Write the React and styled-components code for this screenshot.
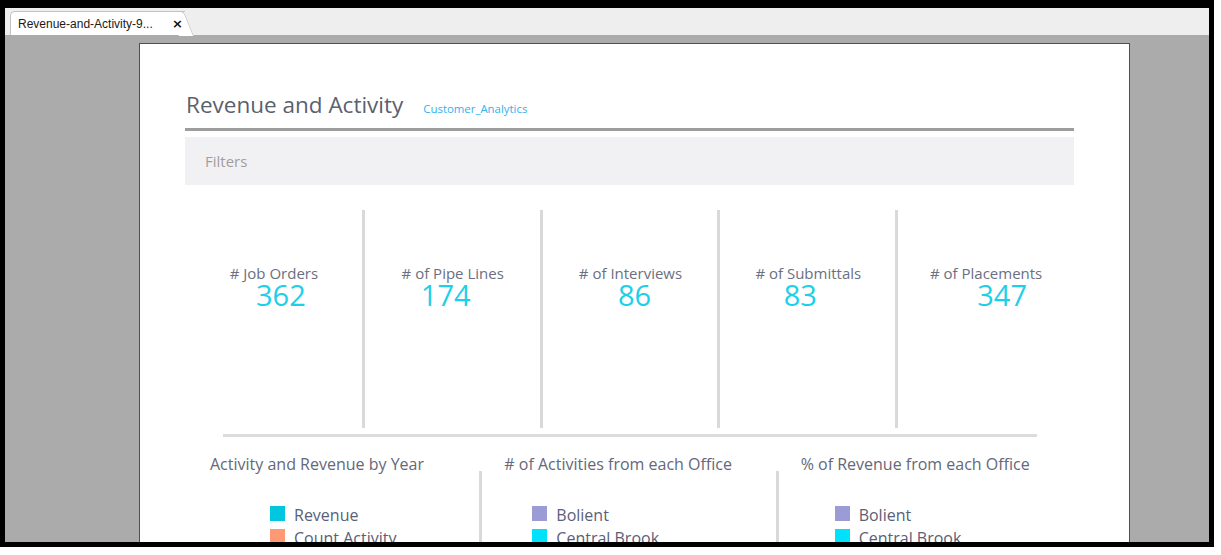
import React from 'react';
import styled, { createGlobalStyle } from 'styled-components';

const Global = createGlobalStyle`
  html, body { margin: 0; padding: 0; background: #ffffff; }
  body { font-family: "Open Sans", "Noto Sans", sans-serif; }
  * { box-sizing: border-box; }
`;

const Window = styled.div`
  width: 1214px;
  height: 547px;
  border: 5px solid #000;
  border-top-width: 8px;
  display: flex;
  flex-direction: column;
  overflow: hidden;
`;

const TabBar = styled.div`
  flex: none;
  height: 27px;
  background: #eeeeee;
  display: flex;
  align-items: flex-end;
  padding-left: 5px;
`;

const Tab = styled.div`
  position: relative;
  height: 24px;
  width: 175px;
  background: #ffffff;
  border: 1px solid #c2c2c2;
  border-right: none;
  border-bottom: none;
  border-top-left-radius: 5px;
  display: flex;
  align-items: center;
  justify-content: space-between;
  padding: 0 0 0 7px;
  font: 12px "Liberation Sans", Arial, sans-serif;
  color: #1a1a1a;
  &::after {
    content: '';
    position: absolute;
    top: -1px;
    right: -9px;
    width: 14px;
    height: 24px;
    background: #ffffff;
    border-top: 1px solid #c2c2c2;
    border-right: 1px solid #c2c2c2;
    border-top-right-radius: 4px;
    transform: skewX(22deg);
    transform-origin: bottom left;
  }
`;

const TabLabel = styled.span`
  white-space: nowrap;
`;

const TabClose = styled.span`
  position: relative;
  z-index: 1;
  font: bold 13px "DejaVu Sans", sans-serif;
  line-height: 1;
  margin-right: 2px;
  color: #111;
`;

const Stage = styled.div`
  flex: 1;
  background: #ababab;
  padding: 8px 0 0 134px;
  overflow: hidden;
`;

const Page = styled.div`
  width: 991px;
  min-height: 620px;
  background: #ffffff;
  border: 1px solid #505050;
  border-bottom: none;
  padding: 0 55px 0 45px;
`;

const Header = styled.div`
  display: flex;
  align-items: baseline;
  gap: 20px;
  padding: 46px 0 8px 1px;
  border-bottom: 3px solid #9d9d9d;
`;

const Title = styled.h1`
  margin: 0;
  font-size: 22.5px;
  font-weight: 400;
  line-height: 30px;
  color: #5b5f6e;
`;

const Tag = styled.span`
  font-size: 11.4px;
  color: #2fb2ee;
`;

const Filters = styled.div`
  margin-top: 6px;
  height: 48px;
  background: #f1f1f3;
  display: flex;
  align-items: center;
  padding-left: 20px;
  font-size: 15px;
  color: #a29d9d;
`;

const KpiRow = styled.div`
  margin-top: 25px;
  display: grid;
  grid-template-columns: repeat(5, 1fr);
  height: 218px;
`;

const Kpi = styled.div`
  display: flex;
  flex-direction: column;
  align-items: center;
  padding-top: 54px;
  border-left: ${p => (p.$first ? 'none' : '3px solid #d9d9d9')};
  margin-left: ${p => (p.$first ? '0' : '-1px')};
`;

const KpiLabel = styled.div`
  font-size: 15px;
  line-height: 18px;
  color: #6b6f80;
  white-space: nowrap;
`;

const KpiValue = styled.div`
  font-size: 29px;
  line-height: 25px;
  color: #1dcfe8;
  transform: translateX(${p => p.$shift}px);
`;

const Divider = styled.div`
  width: 814px;
  height: 3px;
  margin: 6px auto 0;
  background: #dcdcdc;
`;

const ChartRow = styled.div`
  display: grid;
  grid-template-columns: repeat(3, 1fr);
`;

const Chart = styled.div`
  display: flex;
  flex-direction: column;
`;

const ChartTitle = styled.div`
  margin-top: 19px;
  padding-left: ${p => (p.$first ? 25 : 23)}px;
  font-size: 16px;
  line-height: 16px;
  color: #646878;
  white-space: nowrap;
`;

const ChartBody = styled.div`
  margin-top: -1px;
  margin-left: ${p => (p.$first ? 0 : -2)}px;
  border-left: ${p => (p.$first ? 'none' : '3px solid #d9d9d9')};
  padding: 32px 0 0 ${p => p.$indent}px;
  height: 120px;
`;

const LegendItem = styled.div`
  display: flex;
  align-items: center;
  gap: 9px;
  height: 23px;
  font-size: 16px;
  color: #5a6078;
`;

const Swatch = styled.span`
  width: 15px;
  height: 15px;
  flex: none;
  background: ${p => p.$color};
  margin-top: -2px;
`;

const kpis = [
  { label: '# Job Orders', value: '362', shift: 7 },
  { label: '# of Pipe Lines', value: '174', shift: -7 },
  { label: '# of Interviews', value: '86', shift: 4 },
  { label: '# of Submittals', value: '83', shift: -8 },
  { label: '# of Placements', value: '347', shift: 16 },
];

const charts = [
  {
    title: 'Activity and Revenue by Year',
    indent: 85,
    items: [
      ['Revenue', '#00c6e0'],
      ['Count Activity', '#ff9875'],
    ],
  },
  {
    title: '# of Activities from each Office',
    indent: 50,
    items: [
      ['Bolient', '#9c9bd6'],
      ['Central Brook', '#00e2fb'],
    ],
  },
  {
    title: '% of Revenue from each Office',
    indent: 56,
    items: [
      ['Bolient', '#9c9bd6'],
      ['Central Brook', '#00e2fb'],
    ],
  },
];

export default function App() {
  return (
    <>
      <Global />
      <Window>
        <TabBar>
          <Tab>
            <TabLabel>Revenue-and-Activity-9...</TabLabel>
            <TabClose>×</TabClose>
          </Tab>
        </TabBar>
        <Stage>
          <Page>
            <Header>
              <Title>Revenue and Activity</Title>
              <Tag>Customer_Analytics</Tag>
            </Header>
            <Filters>Filters</Filters>
            <KpiRow>
              {kpis.map((k, i) => (
                <Kpi key={k.label} $first={i === 0}>
                  <KpiLabel>{k.label}</KpiLabel>
                  <KpiValue $shift={k.shift}>{k.value}</KpiValue>
                </Kpi>
              ))}
            </KpiRow>
            <Divider />
            <ChartRow>
              {charts.map((c, i) => (
                <Chart key={c.title}>
                  <ChartTitle $first={i === 0}>{c.title}</ChartTitle>
                  <ChartBody $first={i === 0} $indent={c.indent}>
                    {c.items.map(([name, color]) => (
                      <LegendItem key={name}>
                        <Swatch $color={color} />
                        {name}
                      </LegendItem>
                    ))}
                  </ChartBody>
                </Chart>
              ))}
            </ChartRow>
          </Page>
        </Stage>
      </Window>
    </>
  );
}
